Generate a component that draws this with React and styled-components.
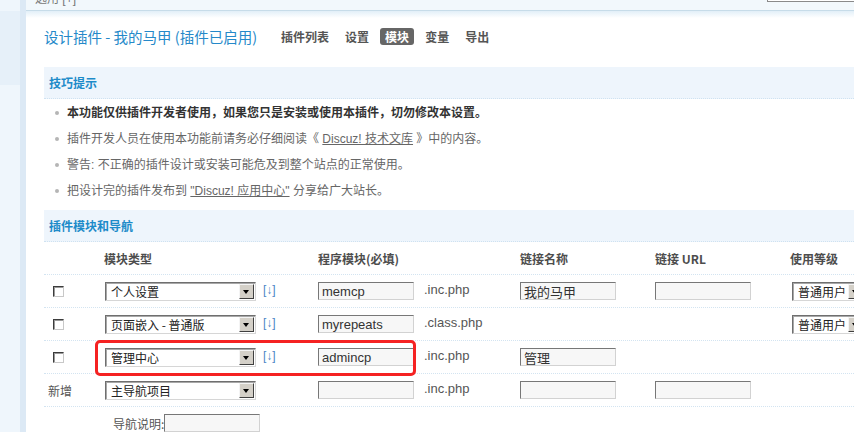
import React from 'react';
import styled, { createGlobalStyle, css } from 'styled-components';

const GlobalStyle = createGlobalStyle`
  html, body {
    margin: 0;
    padding: 0;
    background: #fff;
    overflow: hidden;
  }
  body {
    font-family: "Liberation Sans", "Noto Sans CJK SC", sans-serif;
    font-size: 12px;
    color: #666;
  }
`;

const Page = styled.div`
  display: flex;
  width: 854px;
  height: 432px;
  overflow: hidden;
`;

const Sidebar = styled.div`
  flex: 0 0 20px;
  background: #eff6fc;
  border-right: 6px solid #dce9f5;
  display: flex;
  flex-direction: column;
`;

const SideItem = styled.div`
  margin-top: 11px;
  height: 74px;
  background: #e6f0f9;
`;

const Main = styled.div`
  flex: 1;
  min-width: 0;
  overflow: hidden;
  display: flex;
  flex-direction: column;
`;

const TopBar = styled.div`
  flex: 0 0 10px;
  height: 10px;
  background: #f2f8fc;
  border-bottom: 1px solid #c7dce9;
  display: flex;
  padding-left: 9px;
  overflow: hidden;
`;

const TopText = styled.span`
  line-height: 14px;
  margin-top: -8px;
  color: #777;
  font-size: 12px;
`;

const TopSearch = styled.div`
  margin-left: auto;
  margin-top: -20px;
  height: 21px;
  flex: 0 0 86px;
  border-left: 1px solid #8a8a8a;
  border-bottom: 1px solid #8a8a8a;
  background: #fff;
`;

const Content = styled.div`
  flex: 0 0 auto;
  padding: 14px 0 0 18px;
  background: linear-gradient(#e2eff8, #fff 7px);
`;

const TitleRow = styled.div`
  display: flex;
  align-items: center;
  height: 22px;
  margin-bottom: 20px;
`;

const Title = styled.h1`
  margin: 0 19px 0 0;
  font-size: 14.5px;
  font-weight: normal;
  color: #2589c9;
  font-family: "Noto Sans CJK SC", sans-serif;
  white-space: nowrap;
`;

const Nav = styled.div`
  display: flex;
  gap: 6px;
`;

const NavItem = styled.span`
  height: 17px;
  line-height: 17px;
  padding: 0 5px;
  border-radius: 3px;
  font-weight: bold;
  color: #555;
  font-family: "Noto Sans CJK SC", sans-serif;
  ${p => p.$active && css`
    background: #666;
    color: #fff;
  `}
`;

const SectionHeader = styled.div`
  height: 31px;
  line-height: 31px;
  padding-left: 5px;
  background: #eef5fc;
  border-bottom: 1px dotted #cfe2f1;
  color: #1d8bc9;
  font-weight: bold;
  font-family: "Noto Sans CJK SC", sans-serif;
`;

const TipList = styled.ul`
  list-style: none;
  margin: 0 0 6px;
  padding: 1px 0 0 23px;
`;

const Tip = styled.li`
  position: relative;
  line-height: 26px;
  height: 26px;
  white-space: nowrap;
  color: ${p => (p.$strong ? '#333' : '#666')};
  font-weight: ${p => (p.$strong ? 'bold' : 'normal')};

  &::before {
    content: '';
    position: absolute;
    left: -12px;
    top: 11px;
    width: 4px;
    height: 4px;
    border-radius: 50%;
    background: #b5b5b5;
  }
`;

const TipLink = styled.a`
  color: #666;
  text-decoration: underline;
`;

const Row = styled.div`
  position: relative;
  display: grid;
  grid-template-columns: 52px 213px 202px 135px 135px 200px;
  height: 32px;
  border-bottom: 1px dotted #d3e4f1;
  align-items: center;
`;

const Cell = styled.div`
  display: flex;
  align-items: center;
  padding-left: ${p => p.$pad ?? 9}px;
  white-space: nowrap;
  gap: ${p => p.$gap ?? 0}px;
`;

const HeadCell = styled(Cell)`
  font-weight: bold;
  color: #4d4d4d;
  font-family: "Noto Sans CJK SC", sans-serif;
`;

const CheckBox = styled.span`
  display: inline-block;
  width: 9px;
  height: 9px;
  background: #fff;
  border: 1px solid;
  border-color: #3c3c3c #c8c8c8 #c8c8c8 #3c3c3c;
  box-shadow: inset 1px 1px 0 #9a9a9a;
`;

const FakeSelect = styled.div`
  box-sizing: border-box;
  width: ${p => p.$w}px;
  height: 19px;
  display: flex;
  align-items: center;
  background: #fff;
  border: 1px solid;
  border-color: #6f6f6f #d6d6d6 #d6d6d6 #6f6f6f;
  box-shadow: inset 1px 1px 0 #a8a8a8;
  margin-left: ${p => p.$ml ?? 0}px;
`;

const SelectText = styled.span`
  flex: 1;
  padding-left: 5px;
  color: #222;
  font-size: 12px;
  font-family: "Noto Sans CJK SC", sans-serif;
  line-height: 17px;
  overflow: hidden;
`;

const SelectButton = styled.span`
  position: relative;
  box-sizing: border-box;
  width: 15px;
  height: 15px;
  margin-right: 1px;
  background: #d4d0c8;
  border: 1px solid;
  border-color: #f4f4f4 #404040 #404040 #f4f4f4;

  &::after {
    content: '';
    position: absolute;
    left: 3px;
    top: 5px;
    border-left: 3.5px solid transparent;
    border-right: 3.5px solid transparent;
    border-top: 4px solid #000;
  }
`;

const OrderLink = styled.span`
  color: #4a86c6;
  font-size: 12px;
  margin-top: -3px;
`;

const TextInput = styled.input`
  box-sizing: border-box;
  width: 96px;
  height: 18px;
  padding: 0 3px;
  margin: 0;
  background: #f7f7f7;
  border: 1px solid;
  border-color: #777 #d2d2d2 #d2d2d2 #777;
  font-family: "Liberation Sans", "Noto Sans CJK SC", sans-serif;
  font-size: 13px;
  color: #333;
  outline: none;
`;

const Suffix = styled.span`
  color: #555;
  font-size: 13px;
  margin-top: -3px;
`;

const Highlight = styled.div`
  position: absolute;
  left: 51px;
  top: -1px;
  width: 321px;
  height: 36px;
  box-sizing: border-box;
  border: 3px solid #f52222;
  border-radius: 5px;
  pointer-events: none;
`;

const NoteLabel = styled.span`
  color: #555;
  font-family: "Noto Sans CJK SC", sans-serif;
`;

const Select = ({ text, w = 151, ml }) => (
  <FakeSelect $w={w} $ml={ml}>
    <SelectText>{text}</SelectText>
    <SelectButton />
  </FakeSelect>
);

const rows = [
  { kind: 'check', type: '个人设置', order: true, module: 'memcp', suffix: '.inc.php', name: '我的马甲', url: true, level: true },
  { kind: 'check', type: '页面嵌入 - 普通版', order: true, module: 'myrepeats', suffix: '.class.php', level: true },
  { kind: 'check', type: '管理中心', order: true, module: 'admincp', suffix: '.inc.php', name: '管理', mark: true },
  { kind: 'new', type: '主导航项目', module: '', suffix: '.inc.php', name: '', url: true },
];

export default function App() {
  return (
    <>
      <GlobalStyle />
      <Page>
        <Sidebar>
          <SideItem />
        </Sidebar>
        <Main>
          <TopBar>
            <TopText>选用 [+]</TopText>
            <TopSearch />
          </TopBar>
          <Content>
            <TitleRow>
              <Title>设计插件 - 我的马甲 (插件已启用)</Title>
              <Nav>
                <NavItem>插件列表</NavItem>
                <NavItem>设置</NavItem>
                <NavItem $active>模块</NavItem>
                <NavItem>变量</NavItem>
                <NavItem>导出</NavItem>
              </Nav>
            </TitleRow>

            <SectionHeader>技巧提示</SectionHeader>
            <TipList>
              <Tip $strong>本功能仅供插件开发者使用，如果您只是安装或使用本插件，切勿修改本设置。</Tip>
              <Tip>插件开发人员在使用本功能前请务必仔细阅读《 <TipLink>Discuz! 技术文库</TipLink> 》中的内容。</Tip>
              <Tip>警告: 不正确的插件设计或安装可能危及到整个站点的正常使用。</Tip>
              <Tip>把设计完的插件发布到 <TipLink>"Discuz! 应用中心"</TipLink> 分享给广大站长。</Tip>
            </TipList>

            <SectionHeader>插件模块和导航</SectionHeader>
            <Row>
              <HeadCell />
              <HeadCell $pad={8}>模块类型</HeadCell>
              <HeadCell>程序模块(必填)</HeadCell>
              <HeadCell>链接名称</HeadCell>
              <HeadCell>链接 URL</HeadCell>
              <HeadCell>使用等级</HeadCell>
            </Row>

            {rows.map((r, i) => (
              <Row key={i}>
                {r.kind === 'check' ? (
                  <Cell><CheckBox /></Cell>
                ) : (
                  <Cell $pad={4}><NoteLabel>新增</NoteLabel></Cell>
                )}
                <Cell $gap={7}>
                  <Select text={r.type} />
                  {r.order && <OrderLink>[↓]</OrderLink>}
                </Cell>
                <Cell $gap={10}>
                  <TextInput readOnly value={r.module} />
                  <Suffix>{r.suffix}</Suffix>
                </Cell>
                <Cell>{r.name !== undefined && <TextInput readOnly value={r.name} />}</Cell>
                <Cell>{r.url && <TextInput readOnly value="" />}</Cell>
                <Cell>{r.level && <Select text="普通用户" w={73} ml={2} />}</Cell>
                {r.mark && <Highlight />}
              </Row>
            ))}

            <Row>
              <Cell />
              <Cell $pad={17}>
                <NoteLabel>导航说明:</NoteLabel>
                <TextInput readOnly value="" />
              </Cell>
            </Row>
          </Content>
        </Main>
      </Page>
    </>
  );
}
